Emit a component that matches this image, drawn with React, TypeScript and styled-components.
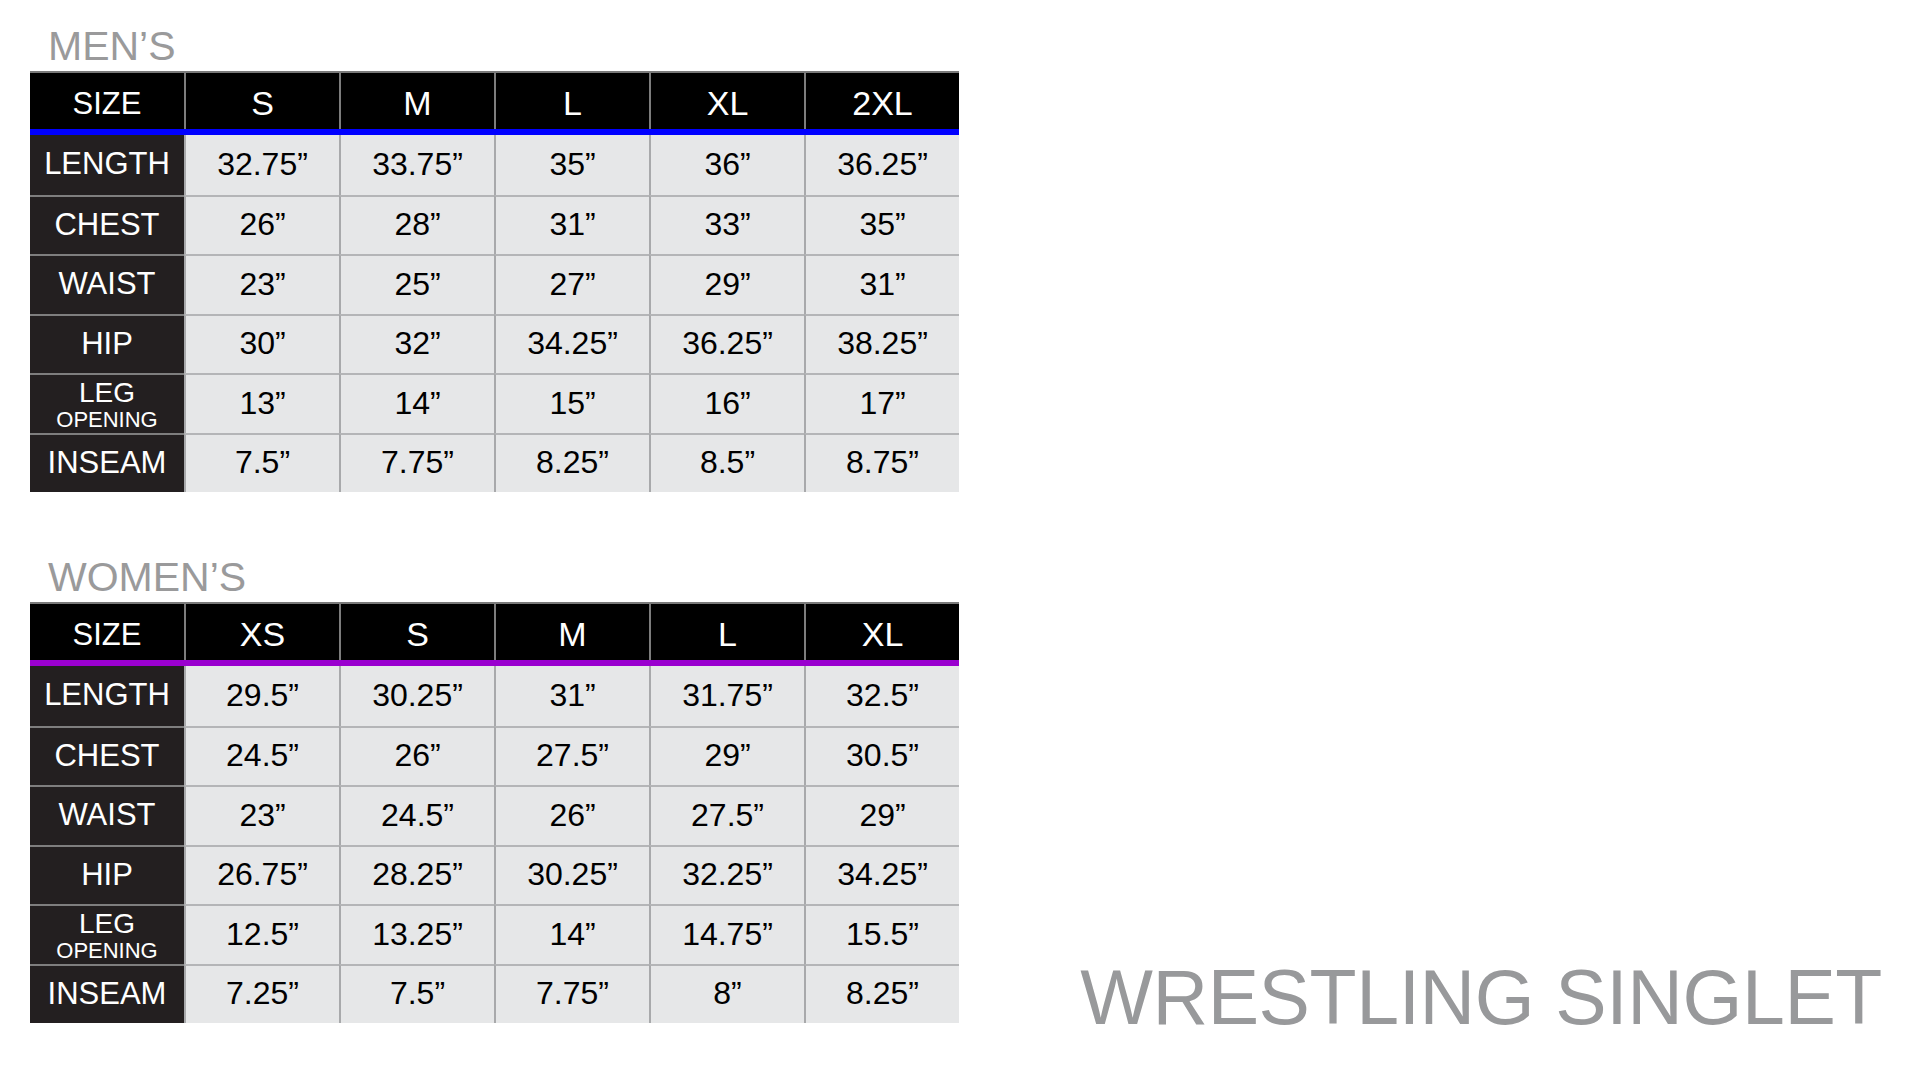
import React from 'react';
import styled, { createGlobalStyle } from 'styled-components';

const GlobalStyle = createGlobalStyle`
  html, body { margin: 0; padding: 0; background: #fff; }
  body { font-family: "Liberation Sans", Arial, sans-serif; }
`;

type Row = { label: string; sub?: string; values: string[] };
type Chart = { title: string; accent: string; sizes: string[]; rows: Row[] };

const charts: Chart[] = [
  {
    title: 'MEN’S',
    accent: '#0000ff',
    sizes: ['S', 'M', 'L', 'XL', '2XL'],
    rows: [
      { label: 'LENGTH', values: ['32.75”', '33.75”', '35”', '36”', '36.25”'] },
      { label: 'CHEST', values: ['26”', '28”', '31”', '33”', '35”'] },
      { label: 'WAIST', values: ['23”', '25”', '27”', '29”', '31”'] },
      { label: 'HIP', values: ['30”', '32”', '34.25”', '36.25”', '38.25”'] },
      { label: 'LEG', sub: 'OPENING', values: ['13”', '14”', '15”', '16”', '17”'] },
      { label: 'INSEAM', values: ['7.5”', '7.75”', '8.25”', '8.5”', '8.75”'] },
    ],
  },
  {
    title: 'WOMEN’S',
    accent: '#9a00cf',
    sizes: ['XS', 'S', 'M', 'L', 'XL'],
    rows: [
      { label: 'LENGTH', values: ['29.5”', '30.25”', '31”', '31.75”', '32.5”'] },
      { label: 'CHEST', values: ['24.5”', '26”', '27.5”', '29”', '30.5”'] },
      { label: 'WAIST', values: ['23”', '24.5”', '26”', '27.5”', '29”'] },
      { label: 'HIP', values: ['26.75”', '28.25”', '30.25”', '32.25”', '34.25”'] },
      { label: 'LEG', sub: 'OPENING', values: ['12.5”', '13.25”', '14”', '14.75”', '15.5”'] },
      { label: 'INSEAM', values: ['7.25”', '7.5”', '7.75”', '8”', '8.25”'] },
    ],
  },
];

const Page = styled.div`
  width: 1920px;
  height: 1085px;
  box-sizing: border-box;
  padding: 26px 38px 0 30px;
  display: flex;
  justify-content: space-between;
  align-items: flex-start;
`;

const Charts = styled.div`
  display: flex;
  flex-direction: column;
  gap: 65px;
`;

const Section = styled.section`
  display: flex;
  flex-direction: column;
`;

const Heading = styled.h2`
  margin: 0 0 4px 18px;
  font-size: 41px;
  line-height: 1;
  font-weight: 400;
  color: #9a9a9b;
`;

const Table = styled.div`
  display: flex;
  flex-direction: column;
  width: 929px;
`;

const HeadRow = styled.div<{ $accent: string }>`
  display: grid;
  grid-template-columns: 154px repeat(5, 155px);
  height: 64px;
  box-sizing: border-box;
  background: #000;
  border-top: 2px solid #7a7a7a;
  border-bottom: 6px solid ${(p) => p.$accent};
`;

const HeadCell = styled.div<{ $first?: boolean }>`
  display: flex;
  align-items: center;
  justify-content: center;
  box-sizing: border-box;
  padding-top: 4px;
  color: #fff;
  font-size: ${(p) => (p.$first ? '31px' : '34px')};
  line-height: 1;
  border-left: ${(p) => (p.$first ? 'none' : '2px solid #7d7d7d')};
`;

const BodyRow = styled.div`
  display: grid;
  grid-template-columns: 154px repeat(5, 155px);
  height: 59.5px;
`;

const LabelCell = styled.div<{ $top: boolean }>`
  display: flex;
  flex-direction: column;
  align-items: center;
  justify-content: center;
  box-sizing: border-box;
  background: #231f20;
  color: #fff;
  font-size: 31px;
  line-height: 1;
  padding-bottom: 2px;
  border-top: ${(p) => (p.$top ? '2px solid #7e7e7e' : 'none')};
`;

const LegLabel = styled.span`
  font-size: 28px;
  line-height: 1;
  margin-top: 4px;
`;

const SubLabel = styled.span`
  font-size: 22px;
  line-height: 1;
  margin-top: 2px;
`;

const ValueCell = styled.div<{ $top: boolean }>`
  display: flex;
  align-items: center;
  justify-content: center;
  box-sizing: border-box;
  background: #e6e7e8;
  color: #000;
  font-size: 32px;
  line-height: 1;
  padding-bottom: 2px;
  border-left: 2px solid #a8a9ab;
  border-top: ${(p) => (p.$top ? '2px solid #b4b5b7' : 'none')};
`;

const Title = styled.h1`
  align-self: flex-end;
  margin: 0 0 49px;
  font-size: 77px;
  letter-spacing: -0.4px;
  line-height: 1;
  font-weight: 400;
  color: #98999b;
  white-space: nowrap;
`;

const SizeTable: React.FC<{ chart: Chart }> = ({ chart }) => (
  <Section>
    <Heading>{chart.title}</Heading>
    <Table>
      <HeadRow $accent={chart.accent}>
        <HeadCell $first>SIZE</HeadCell>
        {chart.sizes.map((s) => (
          <HeadCell key={s}>{s}</HeadCell>
        ))}
      </HeadRow>
      {chart.rows.map((r, i) => (
        <BodyRow key={r.label}>
          <LabelCell $top={i > 0}>
            {r.sub ? (
              <>
                <LegLabel>{r.label}</LegLabel>
                <SubLabel>{r.sub}</SubLabel>
              </>
            ) : (
              r.label
            )}
          </LabelCell>
          {r.values.map((v, j) => (
            <ValueCell key={j} $top={i > 0}>{v}</ValueCell>
          ))}
        </BodyRow>
      ))}
    </Table>
  </Section>
);

export default function App() {
  return (
    <>
      <GlobalStyle />
      <Page>
        <Charts>
          {charts.map((c) => (
            <SizeTable key={c.title} chart={c} />
          ))}
        </Charts>
        <Title>WRESTLING SINGLET</Title>
      </Page>
    </>
  );
}
